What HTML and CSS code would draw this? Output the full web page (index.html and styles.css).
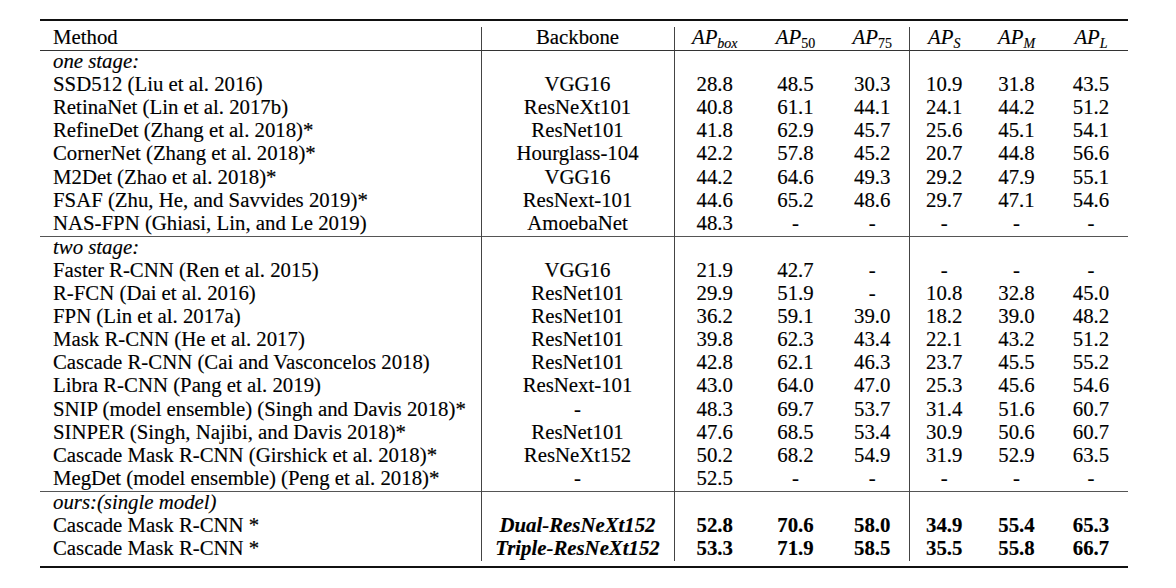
FILE: index.html
```html
<!DOCTYPE html>
<html lang="en">
<head>
<meta charset="utf-8">
<title>Detection results</title>
<link rel="stylesheet" href="styles.css">
</head>
<body>
<div class="page">
  <div class="tbl-wrap">
    <table class="results">
      <colgroup>
        <col class="c-method">
        <col class="c-bb">
        <col class="c-box">
        <col class="c-50">
        <col class="c-75">
        <col class="c-s">
        <col class="c-m">
        <col class="c-l">
      </colgroup>
      <thead>
        <tr>
          <th class="method">Method</th>
          <th class="vl">Backbone</th>
          <th class="vl ap">AP<sub class="it">box</sub></th>
          <th class="ap">AP<sub>50</sub></th>
          <th class="ap">AP<sub>75</sub></th>
          <th class="vl ap">AP<sub class="it">S</sub></th>
          <th class="ap">AP<sub class="it">M</sub></th>
          <th class="ap">AP<sub class="it">L</sub></th>
        </tr>
      </thead>
      <tbody>
        <tr><td class="method sec">one stage:</td><td class="vl"></td><td class="vl"></td><td></td><td></td><td class="vl"></td><td></td><td></td></tr>
        <tr><td class="method">SSD512 (Liu et al. 2016)</td><td class="vl">VGG16</td><td class="vl">28.8</td><td>48.5</td><td>30.3</td><td class="vl">10.9</td><td>31.8</td><td>43.5</td></tr>
        <tr><td class="method">RetinaNet (Lin et al. 2017b)</td><td class="vl">ResNeXt101</td><td class="vl">40.8</td><td>61.1</td><td>44.1</td><td class="vl">24.1</td><td>44.2</td><td>51.2</td></tr>
        <tr><td class="method">RefineDet (Zhang et al. 2018)*</td><td class="vl">ResNet101</td><td class="vl">41.8</td><td>62.9</td><td>45.7</td><td class="vl">25.6</td><td>45.1</td><td>54.1</td></tr>
        <tr><td class="method">CornerNet (Zhang et al. 2018)*</td><td class="vl">Hourglass-104</td><td class="vl">42.2</td><td>57.8</td><td>45.2</td><td class="vl">20.7</td><td>44.8</td><td>56.6</td></tr>
        <tr><td class="method">M2Det (Zhao et al. 2018)*</td><td class="vl">VGG16</td><td class="vl">44.2</td><td>64.6</td><td>49.3</td><td class="vl">29.2</td><td>47.9</td><td>55.1</td></tr>
        <tr><td class="method">FSAF (Zhu, He, and Savvides 2019)*</td><td class="vl">ResNext-101</td><td class="vl">44.6</td><td>65.2</td><td>48.6</td><td class="vl">29.7</td><td>47.1</td><td>54.6</td></tr>
        <tr><td class="method">NAS-FPN (Ghiasi, Lin, and Le 2019)</td><td class="vl">AmoebaNet</td><td class="vl">48.3</td><td>-</td><td>-</td><td class="vl">-</td><td>-</td><td>-</td></tr>
      </tbody>
      <tbody class="group">
        <tr><td class="method sec">two stage:</td><td class="vl"></td><td class="vl"></td><td></td><td></td><td class="vl"></td><td></td><td></td></tr>
        <tr><td class="method">Faster R-CNN (Ren et al. 2015)</td><td class="vl">VGG16</td><td class="vl">21.9</td><td>42.7</td><td>-</td><td class="vl">-</td><td>-</td><td>-</td></tr>
        <tr><td class="method">R-FCN (Dai et al. 2016)</td><td class="vl">ResNet101</td><td class="vl">29.9</td><td>51.9</td><td>-</td><td class="vl">10.8</td><td>32.8</td><td>45.0</td></tr>
        <tr><td class="method">FPN (Lin et al. 2017a)</td><td class="vl">ResNet101</td><td class="vl">36.2</td><td>59.1</td><td>39.0</td><td class="vl">18.2</td><td>39.0</td><td>48.2</td></tr>
        <tr><td class="method">Mask R-CNN (He et al. 2017)</td><td class="vl">ResNet101</td><td class="vl">39.8</td><td>62.3</td><td>43.4</td><td class="vl">22.1</td><td>43.2</td><td>51.2</td></tr>
        <tr><td class="method">Cascade R-CNN (Cai and Vasconcelos 2018)</td><td class="vl">ResNet101</td><td class="vl">42.8</td><td>62.1</td><td>46.3</td><td class="vl">23.7</td><td>45.5</td><td>55.2</td></tr>
        <tr><td class="method">Libra R-CNN (Pang et al. 2019)</td><td class="vl">ResNext-101</td><td class="vl">43.0</td><td>64.0</td><td>47.0</td><td class="vl">25.3</td><td>45.6</td><td>54.6</td></tr>
        <tr><td class="method">SNIP (model ensemble) (Singh and Davis 2018)*</td><td class="vl">-</td><td class="vl">48.3</td><td>69.7</td><td>53.7</td><td class="vl">31.4</td><td>51.6</td><td>60.7</td></tr>
        <tr><td class="method">SINPER (Singh, Najibi, and Davis 2018)*</td><td class="vl">ResNet101</td><td class="vl">47.6</td><td>68.5</td><td>53.4</td><td class="vl">30.9</td><td>50.6</td><td>60.7</td></tr>
        <tr><td class="method">Cascade Mask R-CNN (Girshick et al. 2018)*</td><td class="vl">ResNeXt152</td><td class="vl">50.2</td><td>68.2</td><td>54.9</td><td class="vl">31.9</td><td>52.9</td><td>63.5</td></tr>
        <tr><td class="method">MegDet (model ensemble) (Peng et al. 2018)*</td><td class="vl">-</td><td class="vl">52.5</td><td>-</td><td>-</td><td class="vl">-</td><td>-</td><td>-</td></tr>
      </tbody>
      <tbody class="group">
        <tr><td class="method sec">ours:(single model)</td><td class="vl"></td><td class="vl"></td><td></td><td></td><td class="vl"></td><td></td><td></td></tr>
        <tr class="best"><td class="method">Cascade Mask R-CNN *</td><td class="vl bb-it">Dual-ResNeXt152</td><td class="vl">52.8</td><td>70.6</td><td>58.0</td><td class="vl">34.9</td><td>55.4</td><td>65.3</td></tr>
        <tr class="best"><td class="method">Cascade Mask R-CNN *</td><td class="vl bb-it">Triple-ResNeXt152</td><td class="vl">53.3</td><td>71.9</td><td>58.5</td><td class="vl">35.5</td><td>55.8</td><td>66.7</td></tr>
      </tbody>
    </table>
  </div>
</div>
</body>
</html>
```

FILE: styles.css
```css
html, body {
  margin: 0;
  padding: 0;
  background: #ffffff;
  font-family: "Liberation Serif", "Times New Roman", serif;
}

.page {
  padding: 19px 0 0 40px;
  color: #000;
}

.tbl-wrap {
  width: 1088px;
  border-top: 2px solid #111;
  border-bottom: 2px solid #111;
  padding: 6px 0 5px;
}

.results {
  width: 1088px;
  table-layout: fixed;
  border-collapse: collapse;
  font-family: "Liberation Serif", "Times New Roman", serif;
  font-size: 20.8px;
  color: #000;
  -webkit-text-stroke: 0.15px #000;
}

.c-method { width: 441px; }
.c-bb { width: 193px; }
.c-box { width: 81px; }
.c-50 { width: 81px; }
.c-75 { width: 73px; }
.c-s { width: 70px; }
.c-m { width: 75px; }
.c-l { width: 74px; }

.results th,
.results td {
  padding: 0 0 3.5px;
  line-height: 19.6px;
  text-align: center;
  white-space: nowrap;
  font-weight: normal;
}

.results thead th {
  border-bottom: 1px solid #333;
}

.results .method {
  text-align: left;
  padding-left: 13px;
}

.results .vl {
  border-left: 1px solid #444;
}

.results .sec {
  font-style: italic;
}

.results tbody.group tr:first-child td {
  border-top: 1px solid #555;
}

.results th.ap {
  font-style: italic;
}

.results th.ap sub {
  font-style: normal;
  font-size: 14px;
  vertical-align: -4px;
  line-height: 0;
}

.results th.ap sub.it {
  font-style: italic;
}

.results tr.best td {
  font-weight: bold;
}

.results tr.best td.method {
  font-weight: normal;
}

.results td.bb-it {
  font-style: italic;
}
```
